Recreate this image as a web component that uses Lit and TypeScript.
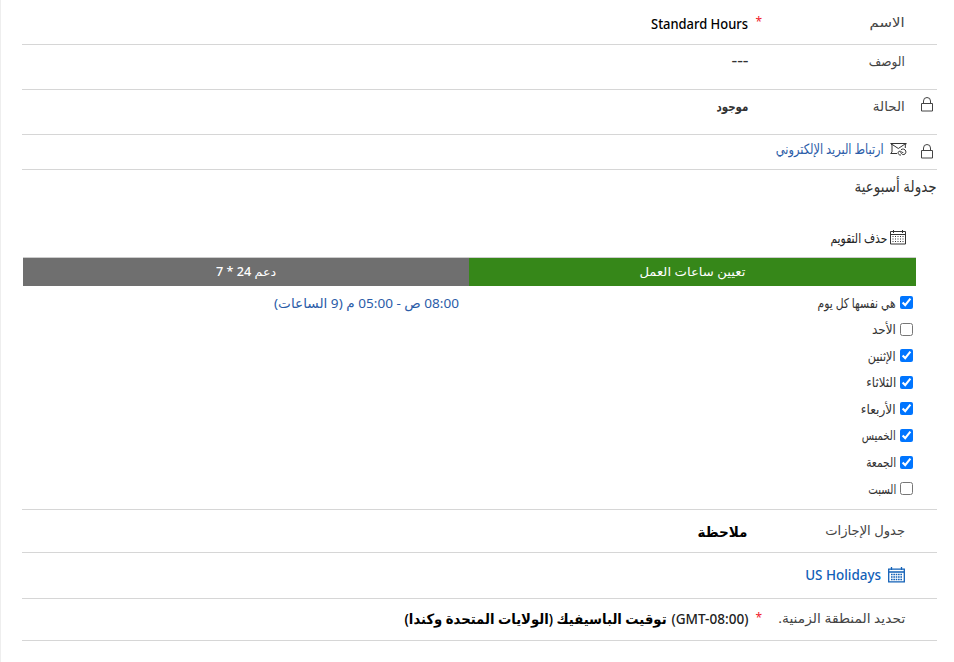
import { LitElement, html, css, svg } from "lit";
import { customElement, property } from "lit/decorators.js";

/** Single line of text condensed or widened to a given width. */
@customElement("fit-text")
class FitText extends LitElement {
  @property({ type: Number }) width = 0;
  static styles = css`
    :host { display: inline-block; white-space: nowrap; line-height: 20px; height: 20px; flex: none; }
    .t { display: inline-block; transform-origin: right center; }
  `;
  render() { return html`<span class="t"><slot></slot></span>`; }
  updated() {
    const t = this.renderRoot.querySelector(".t") as HTMLElement;
    this.style.width = "max-content";
    t.style.transform = "none";
    const w = t.getBoundingClientRect().width;
    this.style.width = `${this.width}px`;
    if (w) t.style.transform = `scaleX(${this.width / w})`;
  }
}

const lock = html`<svg class="lock" width="12" height="15" viewBox="0 0 12 15" fill="none" stroke="#444">
  <path d="M.5 6.500h11v7.500H.5zM2.500 6.500V4a3.500 3.500 0 0 1 7 0v2.500"/></svg>`;

const mail = html`<svg width="17" height="15" viewBox="0 0 17 15" fill="none" stroke="#333">
  <path d="M7 11.500H.7L2 10V3L.7 1.500h15.600L15.300 3v3M1.500 2l6.800 4.500L15 2"/>
  <path d="M11 13C8.500 13.500 7 10.500 9 9.300c2-.9 2.500 1.700 4.300 1.200M11 7.700c1.400-1.200 4.200-.7 4.800 1.400.6 2.400-1.500 4-3.200 3.400-1.300-.6-1-1.800-2.200-1.900"/></svg>`;

const dots = [7.5, 10, 12.5].map((y) => [3, 5.5, 8, 10.5, 13].map((x) => svg`<rect x=${x - 0.5} y=${y - 0.5} width="1" height="1"/>`));
const calendar = html`<svg width="17" height="16" viewBox="0 0 17 16">
  <path d="M.5 2.500h15v12.500H.5zM.5 5.500h15M3.500 1v3M12.500 1v3" fill="none" stroke="#333"/>
  <g fill="#333">${dots}</g></svg>`;
const calendarBlue = html`<svg width="17" height="16" viewBox="0 0 17 16">
  <path d="M.7 2.200h15.600v12.600H.7zM.7 5h15.600M3.500 0v3M13.500 0v3" fill="none" stroke="#1160b7" stroke-width="1.300"/>
  <path d="M3 7.500h11M3 10h11M3 12.500h11" stroke="#1160b7" stroke-width="1.300" stroke-dasharray="1.600 .75"/></svg>`;

const days: [string, boolean, number][] = [
  ["هي نفسها كل يوم", true, 78],
  ["الأحد", false, 24],
  ["الإثنين", true, 28],
  ["الثلاثاء", true, 30],
  ["الأربعاء", true, 35],
  ["الخميس", true, 34],
  ["الجمعة", true, 30],
  ["السبت", false, 28],
];

@customElement("app-root")
class AppRoot extends LitElement {
  static styles = css`
    :host { display: block; height: 662px; box-sizing: border-box; overflow: hidden; direction: rtl; background: #fff;
      border-left: 1px solid #eee; padding: 0 17px 0 21px; font: 14px/20px "Noto Sans", "DejaVu Sans", sans-serif; color: #444; }
    .row { display: grid; grid-template-columns: 32px 144px 13px 1fr; align-items: start; box-sizing: border-box; border-bottom: 1px solid #d6d6d6; }
    .name { height: 45px; padding-top: 12px; }
    .desc { height: 45px; padding-top: 6px; }
    .state { height: 45px; padding-top: 6px; }
    .mail { height: 35px; padding-top: 4px; }
    .hol { height: 43px; padding-top: 10px; }
    .us { height: 46px; padding-top: 12px; }
    .zone { height: 42px; padding-top: 9px; }
    .lock { display: block; margin: 1px 4px 0 0; }
    .mail .lock { margin-top: 5px; }
    .value { color: #000; display: flex; gap: 4px; padding-top: 2px; font-weight: 500; }
    .state .value, .desc .value { color: #333; padding-top: 0; }
    .label { font-size: 13px; }
    .ar { font-size: 14px; font-weight: 600; }
    .state .ar { font-size: 13px; }
    .zone .value { padding-top: 1px; }
    .gmt { color: #222; }
    .star { color: #f0202c; font-size: 12px; margin-right: -1px; }
    .link { display: flex; gap: 7px; color: #2b5ca8; grid-column: 2 / -1; }
    .mail .link { font-size: 14px; gap: 6px; }
    .mail svg:not(.lock) { margin: 3px -2px 0 0; }
    .us .link { color: #1160b7; font-weight: 500; gap: 7px; }
    .us svg { margin-top: 2px; }
    .week { height: 340px; box-sizing: border-box; border-bottom: 1px solid #d6d6d6; padding-top: 6px; }
    .title { font-size: 16px; color: #333; height: 20px; }
    .remove { display: flex; gap: 3px; margin: 32px 30px 0 0; height: 29px; color: #222; font-size: 13.500px; font-weight: 500; }
    .remove svg { margin-top: 1px; }
    .tabs { display: flex; margin: 0 21px 0 1px; border-top: 1px solid #ccc; height: 28px; color: #fff; font-size: 12px; font-weight: 500; }
    .tab { display: flex; justify-content: center; align-items: center; width: 447px; background: #368719; }
    .tab.off { width: 446px; background: #6f6f6f; }
    .hours { display: flex; padding: 3.400px 24px 0 0; }
    .days { width: 454px; }
    .day { display: flex; align-items: center; gap: 4px; height: 26.570px; font-size: 13.500px; color: #333; }
    .day input { width: 13px; height: 13px; margin: 0; }
    .time { color: #2b5ca8; font-size: 13px; padding-top: 3.600px; }
  `;
  render() {
    return html`
      <div class="row name"><span></span><fit-text class="label" width="35">الاسم</fit-text><span class="star">*</span>
        <div class="value"><fit-text width="97">Standard Hours</fit-text></div></div>
      <div class="row desc"><span></span><fit-text class="label" width="36">الوصف</fit-text><span></span>
        <div class="value"><fit-text width="17">---</fit-text></div></div>
      <div class="row state">${lock}<fit-text class="label" width="32">الحالة</fit-text><span></span>
        <div class="value"><fit-text class="ar" width="32">موجود</fit-text></div></div>
      <div class="row mail">${lock}<div class="link">${mail}<fit-text width="108">ارتباط البريد الإلكتروني</fit-text></div></div>
      <section class="week">
        <div class="title"><fit-text width="82">جدولة أسبوعية</fit-text></div>
        <div class="remove">${calendar}<fit-text width="57">حذف التقويم</fit-text></div>
        <div class="tabs">
          <div class="tab"><fit-text width="106">تعيين ساعات العمل</fit-text></div>
          <div class="tab off"><fit-text width="60">دعم 24 * 7</fit-text></div>
        </div>
        <div class="hours">
          <div class="days">${days.map(([name, on, w]) => html`
            <label class="day"><input type="checkbox" .checked=${on}><fit-text width=${w}>${name}</fit-text></label>`)}</div>
          <div class="time"><fit-text width="185">08:00 ص - 05:00 م (9 الساعات)</fit-text></div>
        </div>
      </section>
      <div class="row hol"><span></span><fit-text class="label" width="80">جدول الإجازات</fit-text><span></span>
        <div class="value"><fit-text class="ar" width="50">ملاحظة</fit-text></div></div>
      <div class="row us"><span></span><div class="link">${calendarBlue}<fit-text width="76">US Holidays</fit-text></div></div>
      <div class="row zone"><span></span><fit-text class="label" width="127">تحديد المنطقة الزمنية.</fit-text><span class="star">*</span>
        <div class="value"><fit-text class="gmt" width="77"><bdi dir="ltr">(GMT-08:00)</bdi></fit-text><fit-text class="ar" width="262">توقيت الباسيفيك (الولايات المتحدة وكندا)</fit-text></div></div>
    `;
  }
}
